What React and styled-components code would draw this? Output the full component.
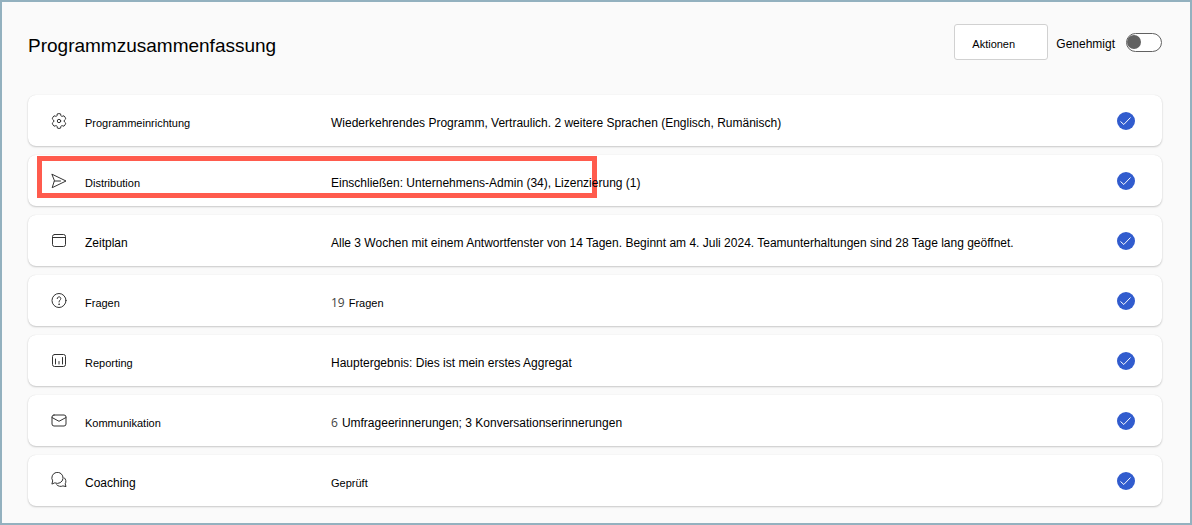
import React, { useState } from "react";
import styled, { createGlobalStyle } from "styled-components";

function GearIcon() {
  return (
    <Icon viewBox="0 0 18 18">
      <path d="M7.4 1.9 Q9 1.2 10.6 1.9 L10.9 3.6 Q11.2 4.5 12.2 4.3 L14 3.8 Q15.2 5 15.8 6.8 L14.5 8 Q13.6 9 14.5 10 L15.8 11.2 Q15.2 13 14 14.2 L12.2 13.7 Q11.2 13.5 10.9 14.4 L10.6 16.1 Q9 16.8 7.4 16.1 L7.1 14.4 Q6.8 13.5 5.8 13.7 L4 14.2 Q2.8 13 2.2 11.2 L3.5 10 Q4.4 9 3.5 8 L2.2 6.8 Q2.8 5 4 3.8 L5.8 4.3 Q6.8 4.5 7.1 3.6 Z" />
      <circle cx="9" cy="9" r="1.7" />
    </Icon>
  );
}

function SendIcon() {
  return (
    <Icon viewBox="0 0 18 18">
      <path d="M2.2 2.3 L16 9 L2.2 15.7 L4.3 9 Z M4.3 9 H10.5" />
    </Icon>
  );
}

function CalendarIcon() {
  return (
    <Icon viewBox="0 0 18 18">
      <rect x="2.5" y="2.5" width="13" height="12" rx="2" />
      <path d="M2.5 5.5 H15.5" />
    </Icon>
  );
}

function QuestionIcon() {
  return (
    <Icon viewBox="0 0 18 18">
      <circle cx="9" cy="8.5" r="7" />
      <path d="M7.2 6.6 C7.2 4.2 10.8 4.2 10.8 6.6 C10.8 8 9 8.2 9 10" />
      <circle cx="9" cy="12.2" r="0.3" />
    </Icon>
  );
}

function ReportIcon() {
  return (
    <Icon viewBox="0 0 18 18">
      <rect x="2.5" y="2.5" width="13" height="12" rx="2" />
      <path d="M5.5 7 V12 M9 9.5 V12 M12.5 5.5 V12" />
    </Icon>
  );
}

function MailIcon() {
  return (
    <Icon viewBox="0 0 18 18">
      <rect x="2" y="3" width="14" height="11" rx="2" />
      <path d="M2 5.5 L9 9.3 L16 5.5" />
    </Icon>
  );
}

function ChatIcon() {
  return (
    <Icon viewBox="0 0 18 18">
      <path d="M2 11.7 L2.7 8.9 A5.6 5.6 0 1 1 5.1 11 Z" />
      <path d="M6.7 12.8 C8.2 14.4 10.8 14.9 12.9 13.9 L16 14.6 L15.2 11.8 C16.4 9.8 16 7.3 14.3 5.8" />
    </Icon>
  );
}

const ROWS = [
  {
    icon: GearIcon,
    label: "Programmeinrichtung",
    text: "Wiederkehrendes Programm, Vertraulich. 2 weitere Sprachen (Englisch, Rumänisch)",
  },
  {
    icon: SendIcon,
    label: "Distribution",
    text: "Einschließen: Unternehmens-Admin (34), Lizenzierung (1)",
    marked: true,
  },
  {
    icon: CalendarIcon,
    label: "Zeitplan",
    large: true,
    text: "Alle 3 Wochen mit einem Antwortfenster von 14 Tagen. Beginnt am 4. Juli 2024. Teamunterhaltungen sind 28 Tage lang geöffnet.",
  },
  { icon: QuestionIcon, label: "Fragen", count: 19, small: true, text: "Fragen" },
  {
    icon: ReportIcon,
    label: "Reporting",
    text: "Hauptergebnis: Dies ist mein erstes Aggregat",
  },
  {
    icon: MailIcon,
    label: "Kommunikation",
    count: 6,
    text: "Umfrageerinnerungen; 3 Konversationserinnerungen",
  },
  { icon: ChatIcon, label: "Coaching", large: true, small: true, text: "Geprüft" },
];

function App() {
  const [approved, setApproved] = useState(false);

  return (
    <Page>
      <GlobalStyle />
      <Header>
        <Title>Programmzusammenfassung</Title>
        <ActionButton type="button">Aktionen</ActionButton>
        <ToggleLabel htmlFor="approved">Genehmigt</ToggleLabel>
        <Toggle
          id="approved"
          type="checkbox"
          role="switch"
          checked={approved}
          onChange={(e) => setApproved(e.target.checked)}
        />
      </Header>
      <List>
        {ROWS.map(({ icon: RowIcon, label, large, count, small, text, marked }) => (
          <Row key={label}>
            {marked && <Highlight />}
            <RowIcon />
            <Label $large={large}>{label}</Label>
            <Detail $small={small}>
              {count && <Count>{count}</Count>}
              {text}
            </Detail>
            <Done viewBox="0 0 18 18" role="img" aria-label="Abgeschlossen">
              <circle cx="9" cy="9" r="9" />
              <path d="M3.5 9.5 L6.8 12.5 L13.5 5.5" />
            </Done>
          </Row>
        ))}
      </List>
    </Page>
  );
}

const GlobalStyle = createGlobalStyle`
  * {
    box-sizing: border-box;
  }

  body {
    margin: 0;
    font-family: "Liberation Sans", Arial, sans-serif;
    color: #000;
  }
`;

const Page = styled.main`
  min-height: 100vh;
  padding: 22px 28px 17px 26px;
  border: 2px solid #93b1bf;
  background: #fafafa;
`;

const Header = styled.header`
  display: flex;
  align-items: center;
  height: 36px;
  margin-bottom: 35px;
`;

const Title = styled.h1`
  flex: 1;
  margin: 0;
  padding-top: 8px;
  font-size: 19px;
  font-weight: 400;
  line-height: 24px;
`;

const ActionButton = styled.button`
  width: 94px;
  height: 36px;
  padding: 3px 17px 0;
  border: 1px solid #d1d1d1;
  border-radius: 3px;
  background: #fff;
  color: #000;
  font-family: inherit;
  font-size: 11px;
  text-align: left;
`;

const ToggleLabel = styled.label`
  padding-top: 3px;
  margin: 0 11px 0 8px;
  font-size: 12px;
`;

const Toggle = styled.input`
  appearance: none;
  display: flex;
  align-items: center;
  width: 36px;
  height: 19px;
  margin: 0;
  border: 1px solid #616161;
  border-radius: 10px;
  background: #fff;

  &::before {
    content: "";
    width: 14px;
    height: 14px;
    border-radius: 50%;
    background: #616161;
  }

  &:checked::before {
    margin-left: auto;
  }
`;

const List = styled.ul`
  display: flex;
  flex-direction: column;
  gap: 9px;
  margin: 0;
  padding: 0;
  list-style: none;
`;

const Row = styled.li`
  position: relative;
  display: grid;
  grid-template-columns: 18px 229px 1fr 18px;
  column-gap: 17px;
  align-items: center;
  height: 51px;
  padding: 0 27px 0 22px;
  border-radius: 8px;
  background: #fff;
  box-shadow: 0 1px 2px rgba(0, 0, 0, 0.2), 0 0 1px rgba(0, 0, 0, 0.1);
`;

const Highlight = styled.div`
  position: absolute;
  top: 1px;
  left: 9px;
  width: 560px;
  height: 42px;
  border: 5px solid #ff5b4d;
`;

const Icon = styled.svg`
  width: 18px;
  height: 18px;
  fill: none;
  stroke: #333;
  stroke-width: 1;
  stroke-linejoin: round;
  stroke-linecap: round;
`;

const Label = styled.span`
  padding-top: 4px;
  font-size: ${({ $large }) => ($large ? "12px" : "11px")};
  line-height: 16px;
`;

const Detail = styled.span`
  position: relative;
  padding-top: 4px;
  font-size: ${({ $small }) => ($small ? "11px" : "12px")};
  line-height: 16px;
`;

const Count = styled.span`
  margin-right: 4px;
  color: #424242;
  font-family: "Open Sans", sans-serif;
  font-size: 12px;
`;

const Done = styled.svg`
  width: 18px;
  height: 18px;
  fill: #315cce;

  path {
    fill: none;
    stroke: #fff;
    stroke-width: 1;
  }
`;

export default App;
